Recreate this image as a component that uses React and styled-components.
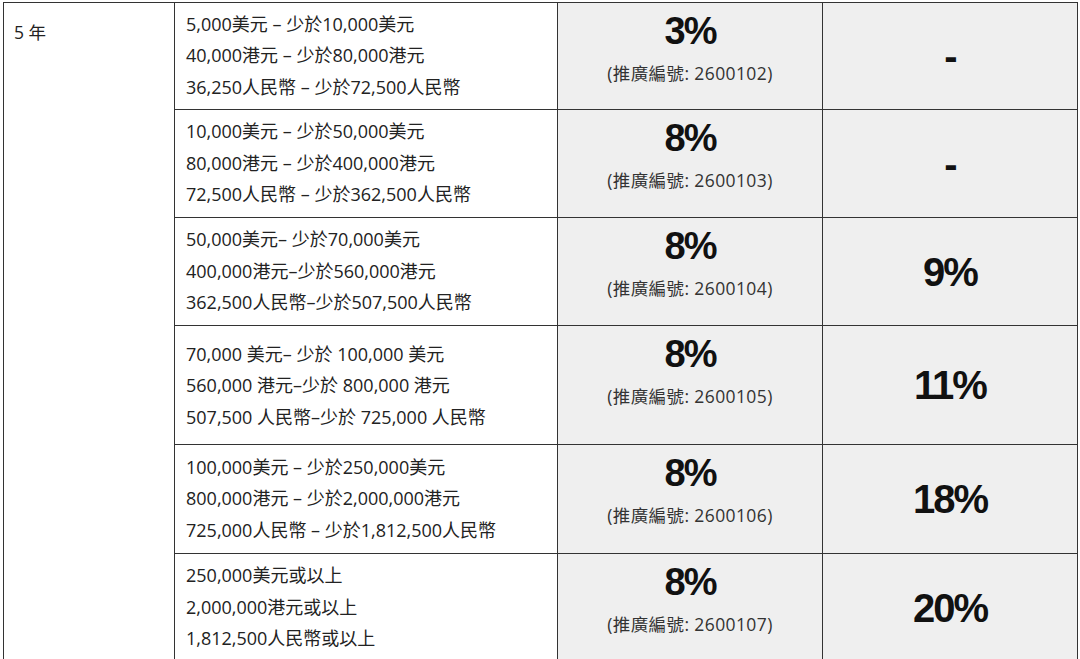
import React from 'react';
import styled, { createGlobalStyle } from 'styled-components';

const GlobalStyle = createGlobalStyle`
  html, body {
    margin: 0;
    padding: 0;
    background: #fff;
    overflow: hidden;
  }
  body {
    font-family: "Open Sans", "Noto Sans CJK TC", sans-serif;
    color: #222;
  }
`;

const Page = styled.div`
  padding: 2px 0 0 3px;
`;

// grid gap doubles as the cell borders
const Grid = styled.div`
  display: grid;
  width: 1075px;
  box-sizing: border-box;
  grid-template-columns: 170px 382px 264px 254px;
  grid-template-rows: 106px 107px 107px 118px 108px 107px;
  gap: 1px;
  padding: 1px;
  background: #333;
`;

const TermCell = styled.div`
  grid-row: 1 / span 6;
  background: #fff;
  padding: 16px 0 0 10px;
  font-size: 17.5px;
  line-height: 26px;
`;

const AmountCell = styled.div`
  background: #fff;
  display: flex;
  flex-direction: column;
  justify-content: center;
  padding: ${p => (p.$roomy ? '2px' : '0')} 0 0 11px;
  font-size: 18px;
  line-height: 31.5px;
  color: #222;
  white-space: nowrap;
`;

const RateCell = styled.div`
  background: #efefef;
  display: flex;
  flex-direction: column;
  align-items: center;
  padding-top: 9px;
`;

const BigRate = styled.div`
  font-family: "Liberation Sans", Arial, sans-serif;
  font-weight: 700;
  font-size: ${p => (p.$large ? '40px' : '38px')};
  line-height: 38px;
  letter-spacing: -2px;
  color: #111;
`;

const Code = styled.div`
  margin-top: 11px;
  font-size: 17.5px;
  letter-spacing: 0.4px;
  line-height: 24px;
  color: #333;
`;

const BonusCell = styled.div`
  background: #efefef;
  display: flex;
  align-items: center;
  justify-content: center;
`;

const rows = [
  {
    lines: ['5,000美元 – 少於10,000美元', '40,000港元 – 少於80,000港元', '36,250人民幣 – 少於72,500人民幣'],
    rate: '3%',
    code: '2600102',
    bonus: '-',
  },
  {
    lines: ['10,000美元 – 少於50,000美元', '80,000港元 – 少於400,000港元', '72,500人民幣 – 少於362,500人民幣'],
    rate: '8%',
    code: '2600103',
    bonus: '-',
  },
  {
    lines: ['50,000美元– 少於70,000美元', '400,000港元–少於560,000港元', '362,500人民幣–少於507,500人民幣'],
    rate: '8%',
    code: '2600104',
    bonus: '9%',
  },
  {
    lines: ['70,000 美元– 少於 100,000 美元', '560,000 港元–少於 800,000 港元', '507,500 人民幣–少於 725,000 人民幣'],
    rate: '8%',
    code: '2600105',
    bonus: '11%',
    roomy: true,
  },
  {
    lines: ['100,000美元 – 少於250,000美元', '800,000港元 – 少於2,000,000港元', '725,000人民幣 – 少於1,812,500人民幣'],
    rate: '8%',
    code: '2600106',
    bonus: '18%',
  },
  {
    lines: ['250,000美元或以上', '2,000,000港元或以上', '1,812,500人民幣或以上'],
    rate: '8%',
    code: '2600107',
    bonus: '20%',
  },
];

const App = () => {
  return (
    <>
      <GlobalStyle />
      <Page>
        <Grid>
          <TermCell>5 年</TermCell>
          {rows.map(row => (
            <React.Fragment key={row.code}>
              <AmountCell $roomy={row.roomy}>
                {row.lines.map(line => (
                  <div key={line}>{line}</div>
                ))}
              </AmountCell>
              <RateCell>
                <BigRate>{row.rate}</BigRate>
                <Code>(推廣編號: {row.code})</Code>
              </RateCell>
              <BonusCell>
                <BigRate $large>{row.bonus}</BigRate>
              </BonusCell>
            </React.Fragment>
          ))}
        </Grid>
      </Page>
    </>
  );
};

export default App;
